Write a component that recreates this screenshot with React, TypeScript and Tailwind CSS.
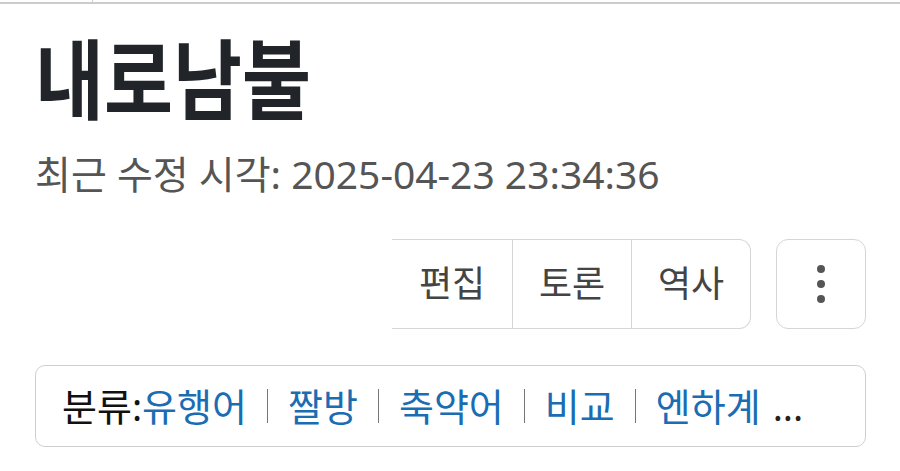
import React from "react";

const categories = ["유행어", "짤방", "축약어", "비교", "엔하계"];

function ActionButtons() {
  return (
    <div className="flex justify-end gap-[25px]">
      <div className="flex h-[90px] rounded-r-[12px] border-y border-r border-[#d6d6d6] text-[36px] text-[#444]">
        <button className="w-[120px]">편집</button>
        <button className="w-[119px] border-l border-[#d6d6d6]">토론</button>
        <button className="w-[119px] border-l border-[#d6d6d6]">역사</button>
      </div>
      <button className="flex h-[90px] w-[90px] flex-col items-center justify-center gap-[7px] rounded-[12px] border border-[#d6d6d6]">
        <span className="h-[8px] w-[8px] rounded-full bg-[#555]" />
        <span className="h-[8px] w-[8px] rounded-full bg-[#555]" />
        <span className="h-[8px] w-[8px] rounded-full bg-[#555]" />
      </button>
    </div>
  );
}

function CategoryBox() {
  return (
    <div className="mt-[36px] flex h-[82px] items-center rounded-[10px] border border-[#cfcfcf] pl-[26px] text-[38px]">
      <span className="text-[#111]">분류:</span>
      {categories.map((name, index) => (
        <React.Fragment key={name}>
          {index > 0 && (
            <span className="mx-[20px] h-[34px] w-px bg-[#777]" />
          )}
          <a href="#" className="text-[#1a6db3]">
            {name}
          </a>
        </React.Fragment>
      ))}
      <span className="ml-[12px] text-[#222]">...</span>
    </div>
  );
}

export default function App() {
  return (
    <div
      className="h-[471px] w-[900px] overflow-hidden bg-white"
      style={{ fontFamily: '"Noto Sans", "Noto Sans CJK KR", sans-serif' }}
    >
      <div className="flex h-[2px]">
        <div className="w-[92px]" />
        <div className="w-px bg-[#ccc]" />
      </div>
      <div className="h-[2px] bg-[#ccc]" />

      <div className="pl-[35px] pr-[34px]">
        <h1 className="mt-[33px] text-[75px] font-bold leading-[84px] text-[#212529]">
          <span className="inline-block scale-y-[1.16]">내로남불</span>
        </h1>
        <p className="mt-[31px] text-[39px] leading-[44px] text-[#555]">
          최근 수정 시각: 2025-04-23 23:34:36
        </p>

        <div className="mt-[43px]">
          <ActionButtons />
        </div>

        <CategoryBox />
      </div>
    </div>
  );
}
